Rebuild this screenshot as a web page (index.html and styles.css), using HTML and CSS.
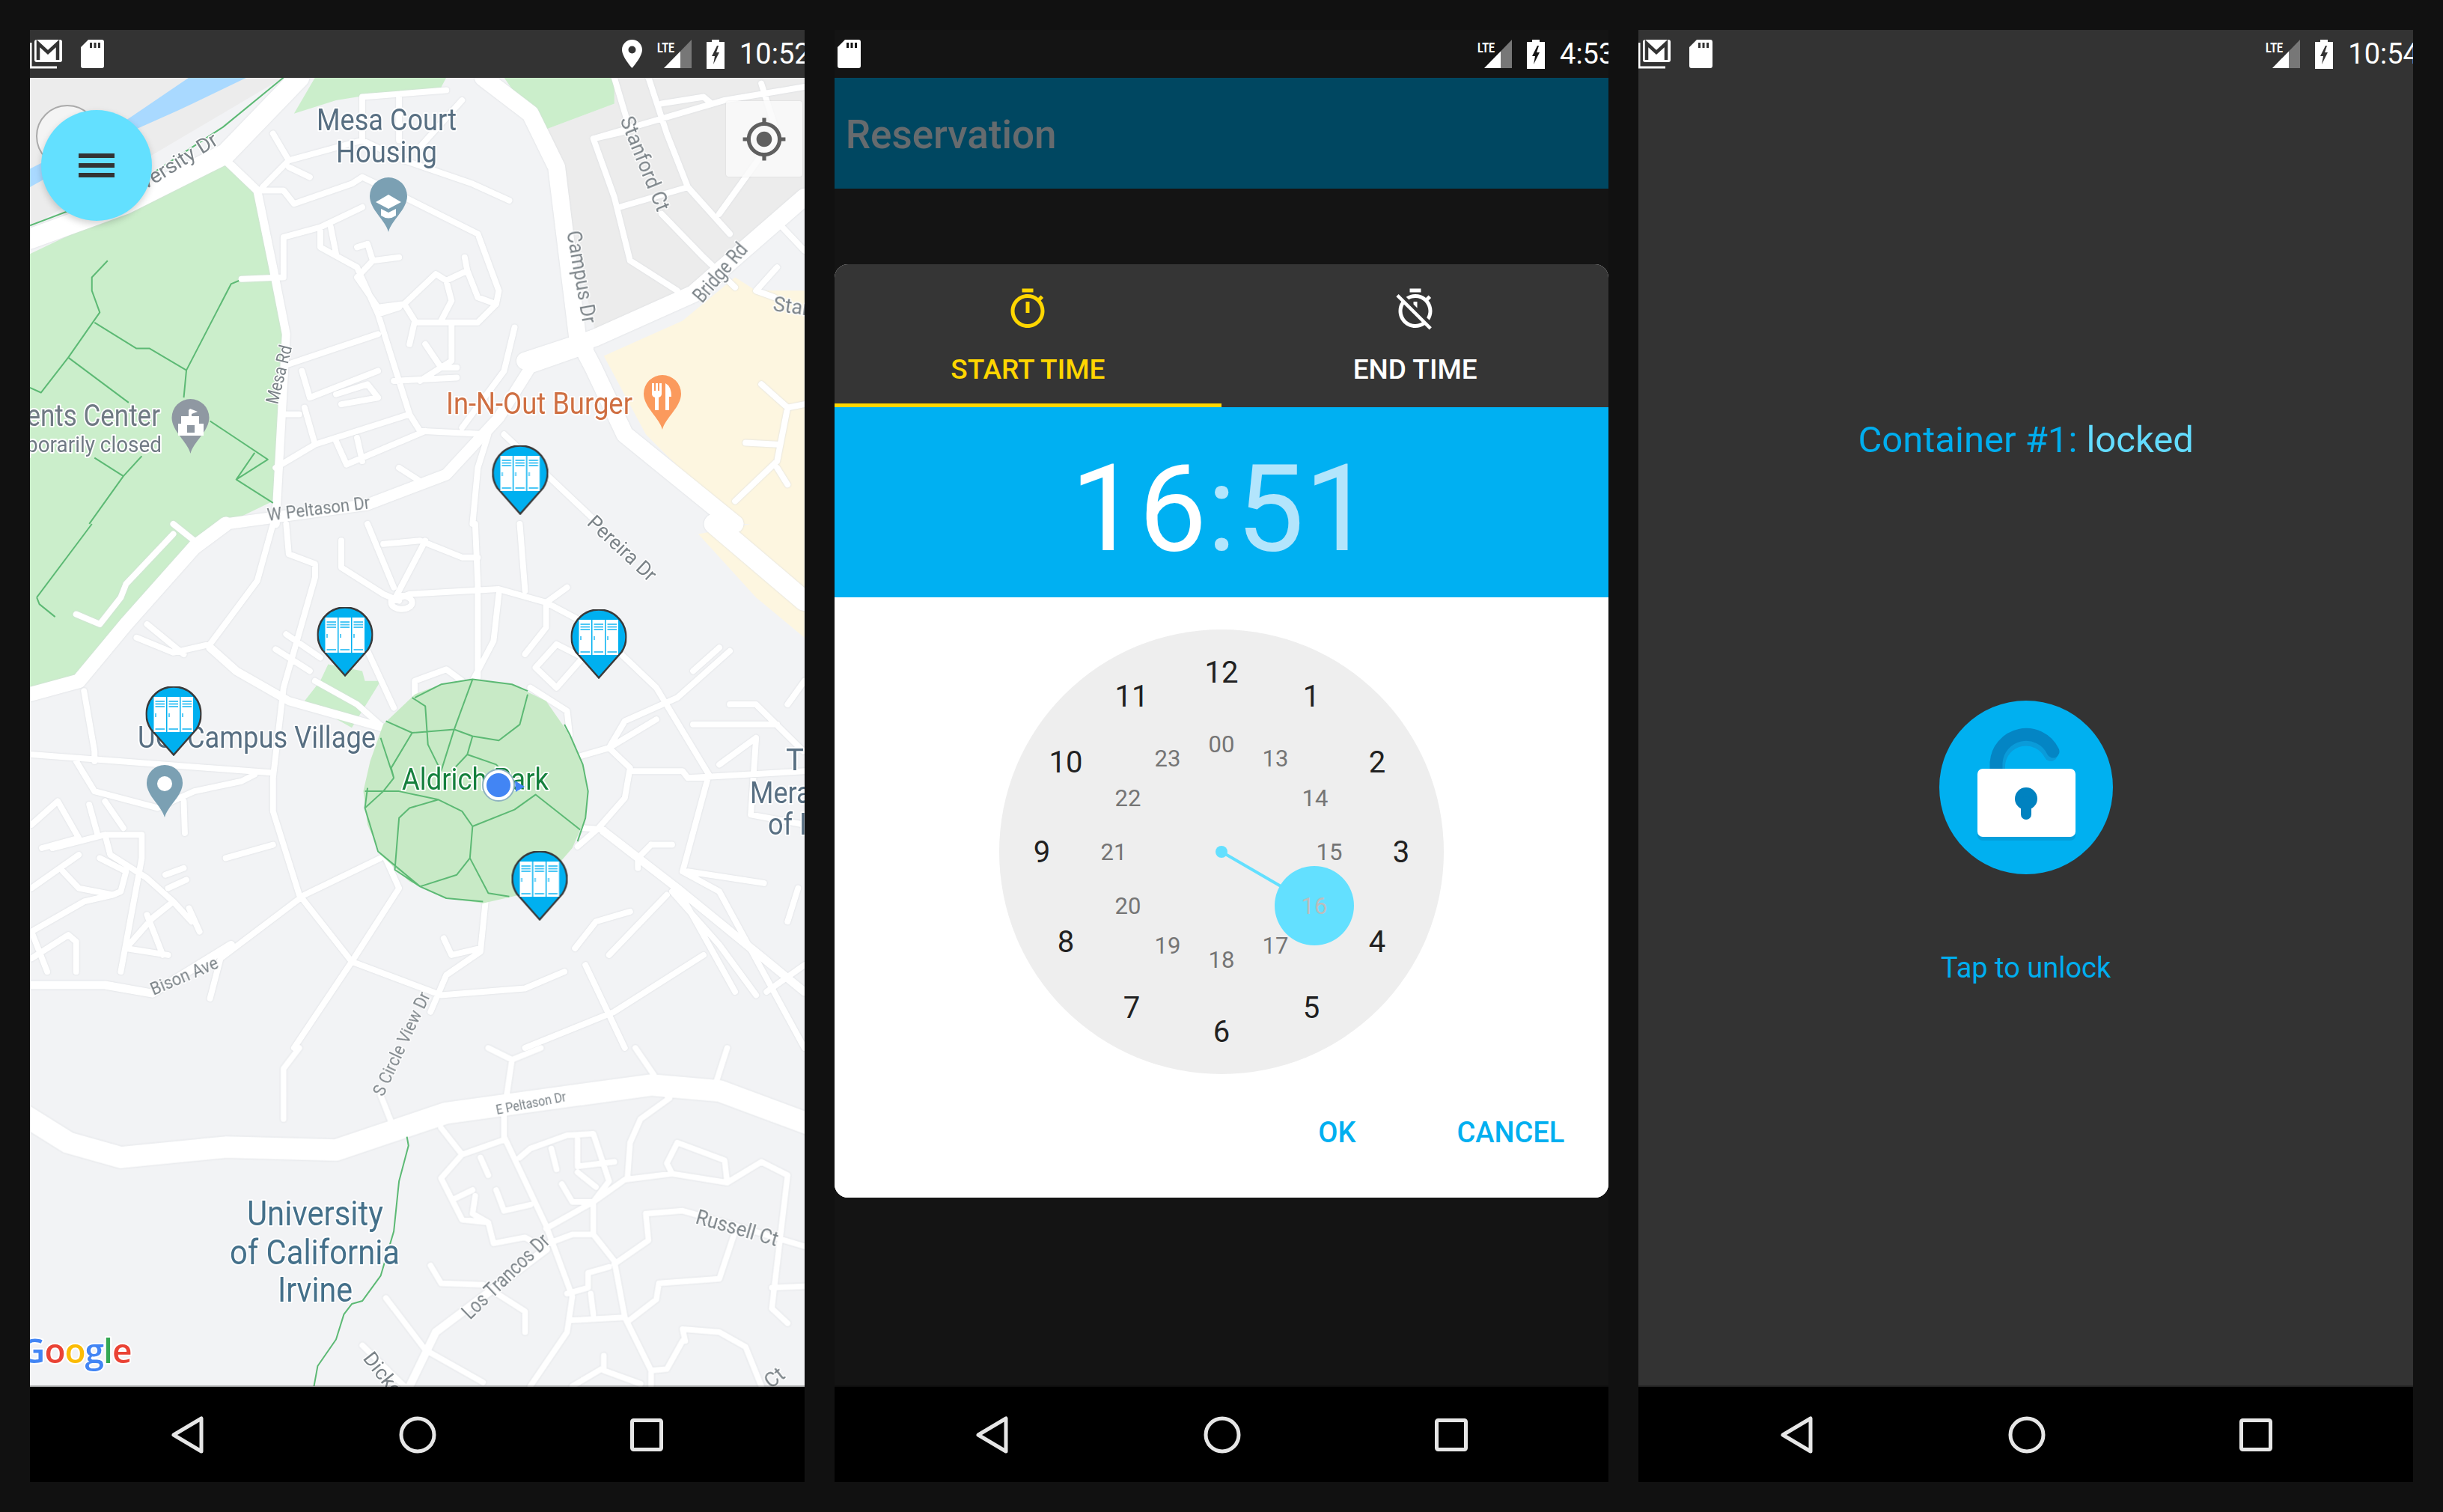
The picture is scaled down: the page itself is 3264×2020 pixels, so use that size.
FILE: index.html
```html
<!DOCTYPE html>
<html lang="en">
<head>
<meta charset="utf-8">
<title>Locker app screens</title>
<link rel="stylesheet" href="styles.css">
</head>
<body>
<svg class="defs" aria-hidden="true">
  <symbol id="i-gmail" viewBox="0 0 44 40">
    <path d="M1 5V38H36" fill="none" stroke="#fff" stroke-width="3"/>
    <rect x="6" y="1" width="37" height="30" rx="3" fill="#fff"/>
    <path d="M11 28V6L24 18 37 6V28" fill="none" stroke="#333" stroke-width="4.5"/>
  </symbol>
  <symbol id="i-sd" viewBox="0 0 31 38">
    <path fill="#fff" fill-rule="evenodd" d="M10 0H28a3 3 0 0 1 3 3V35a3 3 0 0 1-3 3H3a3 3 0 0 1-3-3V10ZM12 4V11H15V4ZM17.500 4V11H20.500V4ZM23 4V11H26V4Z"/>
  </symbol>
  <symbol id="i-loc" viewBox="0 0 27 38">
    <path fill="#fff" fill-rule="evenodd" d="M13.500 0C6 0 0 6 0 13.500 0 23 13.500 38 13.500 38S27 23 27 13.500C27 6 21 0 13.500 0ZM13.500 18.500a5 5 0 1 1 0-10 5 5 0 0 1 0 10Z"/>
  </symbol>
  <symbol id="i-signal" viewBox="0 0 46 38">
    <path fill="#fff" d="M9 38 31 15.400V38Z"/>
    <path fill="#777" d="M31 15.400 46 0V38H31Z"/>
    <text class="lte" x="0" y="17" textLength="23" lengthAdjust="spacingAndGlyphs">LTE</text>
  </symbol>
  <symbol id="i-batt" viewBox="0 0 24 39">
    <path fill="#fff" fill-rule="evenodd" d="M7 0H17V3H24V39H0V3H7ZM14 8 7 22H11L9 33 17 17H13L16 8Z"/>
  </symbol>
  <symbol id="i-back" viewBox="0 0 46 52">
    <path d="M41 4V48L4 26Z" fill="none" stroke="#e6e6e6" stroke-width="5" stroke-linejoin="round"/>
  </symbol>
  <symbol id="i-home" viewBox="0 0 50 50">
    <circle cx="25" cy="25" r="22" fill="none" stroke="#e6e6e6" stroke-width="5"/>
  </symbol>
  <symbol id="i-recent" viewBox="0 0 44 44">
    <rect x="2.500" y="2.500" width="39" height="39" rx="2" fill="none" stroke="#e6e6e6" stroke-width="5"/>
  </symbol>
  <symbol id="locker-pin" viewBox="0 0 75 93">
    <path d="M37.500 91.500 7 57A36.500 36.500 0 1 1 68 57Z" fill="#00b0f0" stroke="#3a3a3a" stroke-width="2.500"/>
    <g fill="#fff"><rect x="11" y="14" width="16.500" height="47"/><rect x="29" y="14" width="16.500" height="47"/><rect x="47" y="14" width="16.500" height="47"/></g>
    <g stroke="#4cc7f5" stroke-width="1.800"><path d="M13 20H25.500M13 23.500H25.500M13 27H25.500M13 57H25.500M31 20H43.500M31 23.500H43.500M31 27H43.500M31 57H43.500M49 20H61.500M49 23.500H61.500M49 27H61.500M49 57H61.500M13.500 36V41M31.500 36V41M49.500 36V41"/></g>
  </symbol>
  <symbol id="poi" viewBox="0 0 52 76">
    <path d="M26 74C22 58 1 44 1 26A25 25 0 0 1 51 26C51 44 30 58 26 74Z"/>
  </symbol>
</svg>

<main class="stage">

  <section class="phone">
    <header class="status">
      <svg class="ic-gmail"><use href="#i-gmail"/></svg>
      <svg class="ic-sd"><use href="#i-sd"/></svg>
      <div class="status-right">
        <svg class="ic-loc"><use href="#i-loc"/></svg>
        <svg class="ic-signal"><use href="#i-signal"/></svg>
        <svg class="ic-batt"><use href="#i-batt"/></svg>
        <span class="clock-text">10:52</span>
      </div>
    </header>
    <div class="map">
      <svg class="map-svg" viewBox="40 104 1035 1749" width="1035" height="1749">
        <rect class="land" x="40" y="104" width="1035" height="1749"/>
        <g transform="scale(.7015 .4464)">
          <path class="grey" d="M57 232H540L57 680ZM1165 232H1532V600L1300 900 1135 1000 1090 700 1035 390 1170 310Z"/>
          <path class="green" d="M560 340 600 232H850L840 262 700 285 640 300ZM960 232H1170V310L1035 390 990 300Z"/>
          <path class="green" d="M57 760 430 480 490 590 520 800 545 1000 520 1500 430 1568V1568H57Z"/>
          <path class="yellow" d="M1150 1065 1300 960 1400 830 1440 870 1532 870V1568H1400L1230 1300Z"/>
          <path class="water" d="M360 232H470L340 330 240 400 57 560V505L240 360Z"/>
        </g>
        <g transform="translate(0 700) scale(.7015 .4464)">
          <path class="green" d="M57 0H440L370 70 240 300 150 470 57 510Z"/>
          <path class="yellow" d="M1330 30 1430 0H1532V340L1440 220Z"/>
          <path class="green" d="M610 470 625 420 690 440 695 470 725 470 670 610 580 530Z"/>
        </g>

        <g class="roads">
          <g transform="scale(.7015 .4464)">
            <path class="w26" d="M57 715 240 610 430 460 570 232"/>
            <path class="w22" d="M920 232 1010 340 1060 500 1100 1010 1130 1100 1190 1300 1400 1568"/>
            <path class="w22" d="M1000 1080 1135 1010 1320 880 1532 590"/>
            <path class="w14" d="M1120 1040 1010 1100 950 1250 850 1420 700 1510 430 1568"/>
            <path class="w10" d="M430 480 490 570 520 800 545 1000 525 1568"/>
            <path class="w7" d="M490 570H540L560 610 670 550 690 530 770 590 910 700 950 870 945 910 910 965H790M500 560 550 480 690 420 770 480 900 550 970 600M520 400 550 480M550 500 590 530M690 290 850 270M690 290V420M760 290V420M880 300 800 440M540 830 460 835M690 620 610 680 540 710V830M610 680V740L680 800 720 940 780 1240 800 1290M630 680 640 760M680 740 700 730 710 780 760 770M710 780 680 830 720 920 770 910 830 820 850 840 890 810 910 890 945 910M885 770 890 810M770 910 790 960 780 1030M720 940 760 920M850 840 860 900 840 960M860 965V1080L800 1140M550 1090 720 1000M720 1110 590 1190 575 1110M640 1180 700 1150 720 1190 650 1210M750 1140 870 1130M810 1030 840 1100H870M980 980 960 1110 880 1280M525 1400 600 1330 780 1240M570 1240H540M580 1220 600 1330M640 1320 660 1390M680 1310 690 1380M660 1390 810 1290M800 1290 930 1300 910 1400 900 1568M960 1300 1140 1568M760 1400 810 1450M1170 232 1200 390 1130 415 1170 590 1200 780 1290 870M1235 232 1270 400 1310 560 1180 620M1130 415 1380 300 1532 260M1260 310 1340 290 1355 310M1260 640 1340 770 1400 860M1310 560 1390 700M1450 250 1480 400 1370 640M1490 680 1532 750M1480 800 1440 870 1475 890M1450 1150 1500 1220 1480 1380 1400 1500M1500 1220 1532 1210M1420 1325 1480 1330M1480 1400 1500 1450"/>
          </g>
          <g transform="translate(0 700) scale(.7015 .4464)">
            <path class="w26" d="M1360 0 1532 230"/>
            <path class="w18" d="M430 0 370 70 240 300 150 470 57 510"/>
            <path class="w10" d="M400 370 450 440 550 530 730 610M57 1380H200L290 1405 440 1260M1150 920 1290 1090 1532 1400"/>
            <path class="w7" d="M330 0 370 50M330 30 240 180 230 220 190 300 145 270M160 500 180 680V710M520 0 490 170 400 360 330 385 260 340M280 300 350 390M545 0 550 90 600 120V160L540 490 520 760V860L570 1110 670 1310 840 1410 1000 1390 1075 1340M650 50V130L730 210 760 230M700 0 750 190M730 60 800 50 880 100H910M810 50 750 230M905 0 910 180V460M990 0 1000 200M745 230 780 210 950 195 1040 235 1130 310 1250 490 1350 750 1300 1040M545 330 610 400M525 375 590 440M600 470 680 540 730 610M700 380 750 550M950 210 940 350 900 470M1040 235V310L1000 390M1080 190 1040 235M1060 360 1020 430 1060 490 1110 400ZM1010 490 1080 560 1085 630M790 510V470L850 435 880 470M1105 695 1160 670 1250 585M1160 670 1200 730 1190 820 1140 910 1100 965M1200 740H1300L1310 760 1532 740M1110 910 1150 915M725 1000 580 1110 420 1300 400 1420M720 950 760 1090 670 1310 560 1568M925 1125 915 1280 850 1350 820 1460M845 1240 860 1290 915 1270M430 1000 520 960M60 690 520 745M145 710 180 800 300 850 370 800 460 770 485 750M350 830 352 925M60 900 110 830 150 940 80 970M100 970 200 930H270V1000L230 1340M200 930 210 990 280 1060 330 1130 290 1180 240 1270 320 1290M60 1090 150 990M120 1040 150 1090 215 1110 160 1130 60 1220 90 1340M170 840 185 925M200 830 235 910M60 1300 130 1230 145 1250V1340M280 1170 310 1290M315 1050 350 1030M320 1090 355 1065M360 1150 380 1220M330 1130 365 1190M215 1110 230 1100 240 1040 190 1000M1115 1320 1190 1568M1200 1160 1135 1190 1095 1270M1240 960H1280M1240 960 1215 1000V1030M1390 380 1290 520 1190 590 1160 670M1300 1040 1370 1100 1532 1568M1310 1040 1455 1075M1290 1090 1400 1400M1340 1290 1170 1460 1000 1568M1390 540H1440L1530 680M1320 600H1480M1370 720 1440 640 1430 870 1532 900M1500 1190 1520 1090M1460 1400 1532 1320M1270 1110 1160 1290M1280 1100 1370 1260 1440 1410M1370 370 1320 440M1500 540 1532 470"/>
            <circle class="w7" cx="765" cy="235" r="20"/>
          </g>
          <g transform="translate(0 1400) scale(.7015 .3954)">
            <path class="w28" d="M40 220 130 320 230 370 430 335 640 345 850 220 1240 125 1370 145 1560 270"/>
            <path class="w10" d="M1040 680 830 960 780 1143"/>
            <path class="w7" d="M570 0 540 70V240M725 160 745 250M1210 0 1245 90M1385 0 1365 110M930 0 975 40 1030 0M975 40 960 220V300L1040 600 1090 840 1080 960 1010 1143M840 270 880 360 840 440 880 580 930 590 940 660 1000 640 1030 670 1090 630H1130L1170 720 1190 910 1240 1090V1143M880 360 960 310M915 370 930 430M945 480 960 550M865 510 900 480M905 500 900 560 930 590M960 550 1010 530M990 370 1010 340 1080 295 1130 290 1160 450 1130 520V630M1050 340 1060 410M1100 310V400L1170 385M1100 420 1135 470M1070 460 1090 520H1130L1040 610M1130 520 1190 445 1280 425 1385 455 1450 385 1500 430 1470 880 1500 930M1280 425 1270 390 1290 320 1380 380 1385 455M1195 440 1200 320 1220 240 1275 170 1255 130M1230 560 1300 550 1400 600 1532 670M1230 560 1235 650 1170 730M1400 620 1370 780 1255 795 1250 850 1195 925M1470 810 1532 805M820 735 840 795 920 800 1000 890V960M735 845 810 1020 920 1130M1080 830 1120 810V760L1160 740M1090 920 1190 910M1125 830 1130 900M690 1005 770 1143M1150 1040V1080L1090 1143M1150 1090 1220 1135M1300 950 1370 960 1420 1010 1450 1143M1300 950 1305 990M1240 1090 1270 1085 1300 990"/>
          </g>
        </g>

        <g transform="translate(0 700) scale(.7015 .4464)">
          <path class="park" d="M900 465 975 480 1040 530 1080 620 1110 720 1120 800 1115 880 1090 970 1040 1060 990 1110 920 1135 850 1120 780 1070 725 990 700 900 692 800 705 710 730 600 790 510 840 480Z"/>
          <path class="gline" d="M900 465 865 615 840 740M735 590 785 625 865 615 900 635 950 648 990 600 1005 510M785 520 810 545 815 660 840 740M785 625 745 730 750 760M725 640 750 760 730 800 695 850M695 800H760L835 825 880 860 900 905 980 855 1020 810 1105 915M835 825 780 850 760 880 752 1035 800 1085 870 1050 895 1000 900 905M895 1000 930 1105 970 1115M900 635 890 690 945 720 975 770M890 690 860 740M790 520 840 480 900 465 975 480 1005 500M1075 600 1085 630 1110 720 1120 800 1115 880 1100 950M800 1085 850 1120 920 1130M700 790 695 850 720 980 800 1085M70 220 175 0M70 220 75 240 105 278"/>
        </g>
        <g transform="scale(.7015 .4464)">
          <path class="gline" d="M57 675 250 560 425 380 540 232M205 780 175 830 175 870 190 935 130 1070 78 1175 57 1160M180 965 260 1043H285L355 1108 440 850 455 840M355 1108 350 1190M130 1070 245 1205M400 1260 510 1375 450 1435 520 1505M485 1355 450 1435M180 1370 235 1425 170 1568M270 1365 235 1425"/>
        </g>
        <g transform="translate(0 1400) scale(.7015 .3954)">
          <path class="gline" d="M775 300 778 330 760 450 750 620 725 770 690 855 670 865 655 900 640 985 605 1075 598 1143"/>
        </g>

        <text class="lbl lbl-blue" x="423" y="174" textLength="187" lengthAdjust="spacingAndGlyphs">Mesa Court</text>
        <text class="lbl lbl-blue" x="449" y="217" textLength="135" lengthAdjust="spacingAndGlyphs">Housing</text>
        <text class="lbl-road" transform="translate(828 160) rotate(68)" textLength="134" lengthAdjust="spacingAndGlyphs">Stanford Ct</text>
        <text class="lbl-road" transform="translate(757 310) rotate(80)" textLength="125" lengthAdjust="spacingAndGlyphs">Campus Dr</text>
        <text class="lbl-road" transform="translate(160 275) rotate(-32)" textLength="157" lengthAdjust="spacingAndGlyphs">University Dr</text>
        <text class="lbl-road lbl-sm" transform="translate(371 541) rotate(-76)" textLength="80" lengthAdjust="spacingAndGlyphs">Mesa Rd</text>
        <text class="lbl-road" transform="translate(938 406) rotate(-49)" textLength="95" lengthAdjust="spacingAndGlyphs">Bridge Rd</text>
        <text class="lbl-road" transform="translate(1032 415) rotate(8)">Stanford</text>
        <text class="lbl lbl-orange" x="596" y="553" textLength="249" lengthAdjust="spacingAndGlyphs">In-N-Out Burger</text>
        <text class="lbl lbl-grey" transform="translate(214 569) scale(.875 1)" text-anchor="end">Students Center</text>
        <text class="lbl lbl-grey lbl-30" transform="translate(216 604) scale(.93 1)" text-anchor="end">Temporarily closed</text>
        <text class="lbl-road lbl-sm" transform="translate(358 696) rotate(-7)" textLength="138" lengthAdjust="spacingAndGlyphs">W Peltason Dr</text>
        <text class="lbl-road" transform="translate(783 700) rotate(43)" textLength="115" lengthAdjust="spacingAndGlyphs">Pereira Dr</text>
        <text class="lbl lbl-blue" x="184" y="999" textLength="318" lengthAdjust="spacingAndGlyphs">UCI Campus Village</text>
        <text class="lbl lbl-green" x="537" y="1055" textLength="196" lengthAdjust="spacingAndGlyphs">Aldrich Park</text>
        <text class="lbl lbl-blue" x="1050" y="1029">T</text>
        <text class="lbl lbl-blue" transform="translate(1002 1073) scale(.9 1)">Mera</text>
        <text class="lbl lbl-blue" transform="translate(1026 1115) scale(.9 1)">of I</text>
        <text class="lbl-road lbl-sm" transform="translate(205 1330) rotate(-23)" textLength="96" lengthAdjust="spacingAndGlyphs">Bison Ave</text>
        <text class="lbl-road lbl-sm" transform="translate(512 1466) rotate(-65)" textLength="150" lengthAdjust="spacingAndGlyphs">S Circle View Dr</text>
        <text class="lbl-road lbl-xs" transform="translate(664 1489) rotate(-11)" textLength="95" lengthAdjust="spacingAndGlyphs">E Peltason Dr</text>
        <text class="lbl lbl-uni" x="330" y="1637" textLength="182" lengthAdjust="spacingAndGlyphs">University</text>
        <text class="lbl lbl-uni" x="307" y="1689" textLength="227" lengthAdjust="spacingAndGlyphs">of California</text>
        <text class="lbl lbl-uni" x="371" y="1739" textLength="100" lengthAdjust="spacingAndGlyphs">Irvine</text>
        <text class="lbl-road" transform="translate(928 1634) rotate(16)" textLength="113" lengthAdjust="spacingAndGlyphs">Russell Ct</text>
        <text class="lbl-road" transform="translate(628 1764) rotate(-44)" textLength="150" lengthAdjust="spacingAndGlyphs">Los Trancos Dr</text>
        <text class="lbl-road" transform="translate(484 1815) rotate(52)">Dickens</text>
        <text class="lbl-road" transform="translate(1030 1856) rotate(-38)">Ct</text>
        <text class="google" x="27" y="1821"><tspan class="g-b">G</tspan><tspan class="g-r">o</tspan><tspan class="g-y">o</tspan><tspan class="g-b">g</tspan><tspan class="g-g">l</tspan><tspan class="g-r">e</tspan></text>

        <use href="#poi" class="poi-slate" x="493" y="236" width="52" height="76"/>
        <path class="pw" d="M519 260 536 270 519 279 502 270ZM509 279V288Q519 295 529 288V279L519 284Z"/>
        <use href="#poi" class="poi-grey" x="228" y="532" width="53" height="76"/>
        <path class="pw" d="M252 548V556H242V566H238V582H272V566H266V556H256V553L264 550 254 546ZM250 568H260V578H250Z"/>
        <use href="#poi" class="poi-orange" x="859" y="500" width="52" height="76"/>
        <path class="pw" d="M871 512H874V522H876V512H879V522H881V512H884V526Q884 530 880 531V548H875V531Q871 530 871 526ZM889 512Q897 516 897 530H894V548H889Z"/>
        <use href="#poi" class="poi-slate" x="195" y="1020" width="50" height="75"/>
        <circle class="pw" cx="220" cy="1047" r="10"/>

        <circle class="dot-ring" cx="666" cy="1049" r="21"/>
        <circle class="dot" cx="666" cy="1049" r="16"/>
        <path class="dot" d="M688 1043 701 1051 689 1058Z"/>

        <use href="#locker-pin" x="657.500" y="595" width="75" height="93"/>
        <use href="#locker-pin" x="423.500" y="811" width="75" height="93"/>
        <use href="#locker-pin" x="762.500" y="814" width="75" height="93"/>
        <use href="#locker-pin" x="194.500" y="917" width="75" height="93"/>
        <use href="#locker-pin" x="683.500" y="1137" width="75" height="93"/>
      </svg>
      <div class="compass"></div>
      <button class="fab" aria-label="Menu"><span></span><span></span><span></span></button>
      <div class="locate">
        <svg viewBox="0 0 24 24" width="62" height="62"><path fill="#5f5f5f" d="M12 8c-2.210 0-4 1.790-4 4s1.790 4 4 4 4-1.790 4-4-1.790-4-4-4zm8.940 3c-.46-4.170-3.770-7.480-7.940-7.940V1h-2v2.060C6.830 3.520 3.520 6.830 3.060 11H1v2h2.060c.46 4.170 3.770 7.480 7.940 7.940V23h2v-2.060c4.170-.46 7.480-3.770 7.940-7.940H23v-2h-2.060zM12 19c-3.870 0-7-3.130-7-7s3.130-7 7-7 7 3.130 7 7-3.130 7-7 7z"/></svg>
      </div>
    </div>
    <nav class="nav">
      <svg class="ic-back"><use href="#i-back"/></svg>
      <svg class="ic-home"><use href="#i-home"/></svg>
      <svg class="ic-recent"><use href="#i-recent"/></svg>
    </nav>
  </section>

  <section class="phone phone-dim">
    <header class="status">
      <svg class="ic-sd"><use href="#i-sd"/></svg>
      <div class="status-right">
        <svg class="ic-signal"><use href="#i-signal"/></svg>
        <svg class="ic-batt"><use href="#i-batt"/></svg>
        <span class="clock-text">4:53</span>
      </div>
    </header>
    <div class="appbar">Reservation</div>
    <div class="dim-body">
      <div class="dialog">
        <div class="tabs">
          <div class="tab tab-active">
            <svg viewBox="0 0 24 24" width="60" height="60"><path fill="currentColor" d="M15 1H9v2h6V1zm-4 13h2V8h-2v6zm8.030-6.610l1.420-1.420c-.43-.51-.9-.99-1.410-1.410l-1.420 1.420C16.070 4.740 14.120 4 12 4c-4.970 0-9 4.030-9 9s4.020 9 9 9 9-4.030 9-9c0-2.120-.74-4.070-1.970-5.610zM12 20c-3.870 0-7-3.130-7-7s3.130-7 7-7 7 3.130 7 7-3.130 7-7 7z"/></svg>
            <span>START TIME</span>
          </div>
          <div class="tab">
            <svg viewBox="0 0 24 24" width="60" height="60"><path fill="currentColor" d="M19.040 4.550l-1.420 1.410C16.070 4.740 14.120 4 12 4c-1.830 0-3.530.55-4.950 1.480l1.460 1.460C9.530 6.350 10.730 6 12 6c3.870 0 7 3.130 7 7 0 1.270-.35 2.470-.94 3.490l1.450 1.450C20.450 16.530 21 14.830 21 13c0-2.120-.74-4.070-1.970-5.610l1.420-1.420-1.410-1.420zM15 1H9v2h6V1zm-4 8.440l2 2V8h-2v1.440zM3.020 4L1.750 5.270 4.500 8.030C3.550 9.450 3 11.160 3 13c0 4.970 4.020 9 9 9 1.840 0 3.550-.55 4.980-1.500l2.500 2.500 1.270-1.270-7.710-7.710L3.020 4zM12 20c-3.870 0-7-3.130-7-7 0-1.280.35-2.480.95-3.520l9.560 9.560c-1.030.61-2.230.96-3.510.96z"/></svg>
            <span>END TIME</span>
          </div>
        </div>
        <div class="time"><span>16</span><span class="time-dim">:51</span></div>
        <div class="picker">
          <svg class="clock" viewBox="-297 -297 594 594" width="594" height="594">
            <circle class="face" r="297"/>
            <line class="hand" x1="0" y1="0" x2="124" y2="72"/>
            <circle class="hand-dot" r="8"/>
            <circle class="hand-dot" cx="124" cy="72" r="53"/>
            <g class="outer">
              <text x="0" y="-226">12</text><text x="120" y="-194">1</text><text x="208" y="-106">2</text><text x="240" y="14">3</text><text x="208" y="134">4</text><text x="120" y="222">5</text><text x="0" y="254">6</text><text x="-120" y="222">7</text><text x="-208" y="134">8</text><text x="-240" y="14">9</text><text x="-208" y="-106">10</text><text x="-120" y="-194">11</text>
            </g>
            <g class="inner">
              <text x="0" y="-133">00</text><text x="72" y="-114">13</text><text x="125" y="-61">14</text><text x="144" y="11">15</text><text class="inner-sel" x="124" y="83">16</text><text x="72" y="136">17</text><text x="0" y="155">18</text><text x="-72" y="136">19</text><text x="-125" y="83">20</text><text x="-144" y="11">21</text><text x="-125" y="-61">22</text><text x="-72" y="-114">23</text>
            </g>
          </svg>
          <div class="actions"><span>OK</span><span>CANCEL</span></div>
        </div>
      </div>
    </div>
    <nav class="nav">
      <svg class="ic-back"><use href="#i-back"/></svg>
      <svg class="ic-home"><use href="#i-home"/></svg>
      <svg class="ic-recent"><use href="#i-recent"/></svg>
    </nav>
  </section>

  <section class="phone">
    <header class="status">
      <svg class="ic-gmail"><use href="#i-gmail"/></svg>
      <svg class="ic-sd"><use href="#i-sd"/></svg>
      <div class="status-right">
        <svg class="ic-signal"><use href="#i-signal"/></svg>
        <svg class="ic-batt"><use href="#i-batt"/></svg>
        <span class="clock-text">10:54</span>
      </div>
    </header>
    <div class="lock-body">
      <p class="lock-title">Container #1: <span>locked</span></p>
      <svg class="lock-badge" viewBox="0 0 232 232" width="232" height="232">
        <circle cx="116" cy="116" r="116" fill="#00b0f0"/>
        <path d="M79 96V86A37 37 0 0 1 149 72" fill="none" stroke="#0a9bd9" stroke-width="18" stroke-linecap="round"/>
        <path d="M76 96V84A40 40 0 0 1 152 68" fill="none" stroke="#0485c4" stroke-width="17" stroke-linecap="round"/>
        <rect x="51" y="96" width="131" height="91" rx="7" fill="#039fdb"/>
        <rect x="51" y="91" width="131" height="91" rx="7" fill="#fff"/>
        <circle cx="116" cy="131" r="15" fill="#0082c0"/>
        <path d="M116 135V152" stroke="#0082c0" stroke-width="14" stroke-linecap="round"/>
      </svg>
      <p class="lock-hint">Tap to unlock</p>
    </div>
    <nav class="nav">
      <svg class="ic-back"><use href="#i-back"/></svg>
      <svg class="ic-home"><use href="#i-home"/></svg>
      <svg class="ic-recent"><use href="#i-recent"/></svg>
    </nav>
  </section>

</main>
</body>
</html>
```

FILE: styles.css
```css
* { box-sizing: border-box; }
html, body { margin: 0; height: 100%; }
body { background: #111; font-family: Roboto, "Liberation Sans", sans-serif; overflow: hidden; }
.defs { position: absolute; width: 0; height: 0; }
.lte { font: 700 19px Roboto, sans-serif; fill: #fff; }

.stage { display: grid; grid-template-columns: repeat(3, 1fr); gap: 40px; padding: 40px; height: 2020px; }
.phone { display: flex; flex-direction: column; min-width: 0; background: #333; overflow: hidden; }
.phone-dim { background: #141414; }

.status { flex: 0 0 64px; display: flex; align-items: center; padding-left: 4px; background: #333; overflow: hidden; }
.phone-dim .status { background: #141414; }
.ic-gmail { width: 44px; height: 40px; margin-left: -4px; margin-right: 24px; flex: none; }
.ic-sd { width: 31px; height: 38px; flex: none; }
.status-right { margin-left: auto; margin-right: -8px; display: flex; align-items: center; gap: 20px; flex: none; }
.ic-loc { width: 27px; height: 38px; }
.ic-signal { width: 46px; height: 38px; }
.ic-batt { width: 24px; height: 39px; }
.clock-text { color: #fff; font-size: 38px; line-height: 40px; }

.nav { flex: 0 0 127px; background: #000; display: flex; align-items: center; justify-content: center; gap: 259px; box-shadow: 0 -2px 0 rgba(0, 0, 0, .35); position: relative; }
.ic-back { width: 46px; height: 52px; }
.ic-home { width: 50px; height: 50px; }
.ic-recent { width: 44px; height: 44px; }

.map { position: relative; flex: 1; background: #f2f3f5; overflow: hidden; }
.map-svg { display: block; }
.land { fill: #f2f3f5; }
.grey { fill: #ececec; }
.green { fill: #cbeecb; }
.yellow { fill: #fdf6e0; }
.water { fill: #a9d9ff; }
.park { fill: #c8eac6; }
.gline { fill: none; stroke: #5cb974; stroke-width: 2px; vector-effect: non-scaling-stroke; stroke-linejoin: round; }
.roads { filter: drop-shadow(0 0 1px #d6d9dd); }
.roads path, .roads circle { fill: none; stroke: #fff; vector-effect: non-scaling-stroke; stroke-linecap: round; stroke-linejoin: round; }
.w7 { stroke-width: 8px; }
.w10 { stroke-width: 11px; }
.w14 { stroke-width: 15px; }
.w18 { stroke-width: 19px; }
.w22 { stroke-width: 23px; }
.w26 { stroke-width: 27px; }
.w28 { stroke-width: 29px; }

.lbl, .lbl-road, .google { paint-order: stroke; stroke: #fff; stroke-linejoin: round; font-family: Roboto, sans-serif; }
.lbl { font-size: 40px; stroke-width: 4px; }
.lbl-blue { fill: #586f82; }
.lbl-orange { fill: #cf6f42; }
.lbl-grey { fill: #707a84; }
.lbl-30 { font-size: 30px; }
.lbl-green { fill: #15803d; }
.lbl-uni { fill: #44708a; font-size: 46px; }
.lbl-road { fill: #7b8388; font-size: 27px; stroke-width: 3px; }
.lbl-sm { font-size: 24px; }
.lbl-xs { font-size: 19px; }
.google { font-size: 46px; font-family: "Open Sans", sans-serif; font-weight: 600; stroke-width: 4px; letter-spacing: -1px; }
.g-b { fill: #4285f4; }
.g-r { fill: #ea4335; }
.g-y { fill: #fbbc05; }
.g-g { fill: #34a853; }
.poi-slate { fill: #7ba0b3; }
.poi-grey { fill: #8f98a2; }
.poi-orange { fill: #fb9a5d; }
.pw { fill: #fff; }
.dot { fill: #4285f4; }
.dot-ring { fill: #fff; stroke: #8fb3c0; stroke-width: 2px; }

.compass { position: absolute; left: 8px; top: 36px; width: 84px; height: 84px; border-radius: 50%; background: #f4f4f4; border: 2px solid #aaa; }
.fab { position: absolute; left: 15px; top: 43px; width: 148px; height: 148px; border: 0; border-radius: 50%; background: #63e0ff; display: flex; flex-direction: column; align-items: center; justify-content: center; gap: 7px; box-shadow: 0 4px 10px rgba(0, 0, 0, .18); }
.fab span { display: block; width: 48px; height: 6px; background: #333; }
.locate { position: absolute; right: 3px; top: 31px; width: 102px; height: 101px; background: rgba(250, 250, 250, .82); border-radius: 4px; display: flex; align-items: center; justify-content: center; box-shadow: 0 0 2px rgba(0, 0, 0, .12); }

.appbar { flex: 0 0 148px; background: #004761; color: #666b6e; font-size: 53px; font-weight: 500; display: flex; align-items: center; padding: 4px 0 0 15px; }
.dim-body { flex: 1; padding-top: 101px; background: #141414; }
.dialog { border-radius: 18px; overflow: hidden; background: #fff; }
.tabs { display: flex; height: 191px; background: #353535; }
.tab { flex: 1; display: flex; flex-direction: column; align-items: center; padding-top: 30px; color: #fff; font-size: 37px; font-weight: 500; gap: 29px; }
.tab-active { color: #ffd600; border-bottom: 5px solid #ffd600; }
.time { height: 254px; padding-top: 18px; background: #00b0f2; color: #fff; font-size: 162px; display: flex; align-items: center; justify-content: center; }
.time-dim { color: #b3e5fc; }
.picker { background: #fff; padding-top: 43px; height: 802px; display: flex; flex-direction: column; align-items: center; }
.clock { display: block; flex: none; }
.face { fill: #eee; }
.hand { stroke: #63e0ff; stroke-width: 4px; }
.hand-dot { fill: #63e0ff; }
.clock text { text-anchor: middle; font-family: Roboto, sans-serif; }
.outer { fill: #212121; font-size: 40px; }
.inner { fill: #757575; font-size: 31px; }
.inner .inner-sel { fill: #bdbdbd; }
.actions { align-self: flex-end; margin-top: 55px; padding-right: 59px; display: flex; gap: 135px; color: #00aff0; font-size: 38px; line-height: 46px; font-weight: 500; }

.lock-body { flex: 1; display: flex; flex-direction: column; align-items: center; background: #333; }
.lock-title { margin: 456px 0 0; font-size: 49px; line-height: 56px; color: #00aeef; }
.lock-title span { color: #63dcff; }
.lock-badge { display: block; margin-top: 320px; }
.lock-hint { margin: 102px 0 0; font-size: 38px; line-height: 46px; color: #00aeef; }
```
